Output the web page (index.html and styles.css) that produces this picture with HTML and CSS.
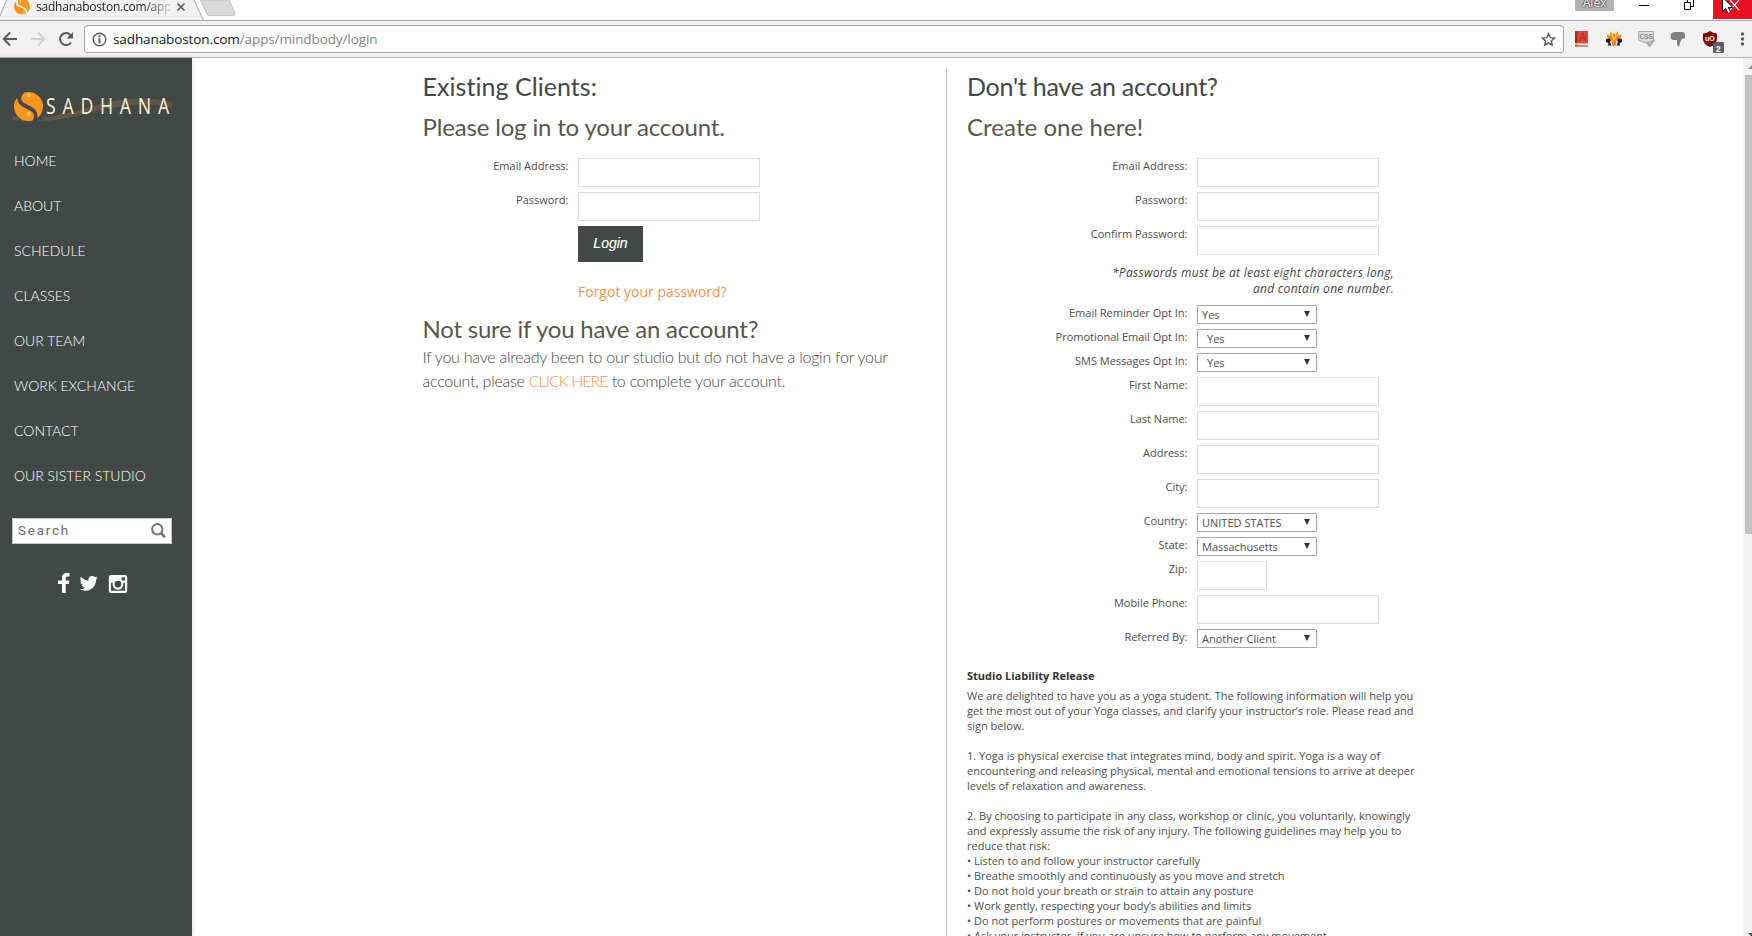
FILE: index.html
```html
<!DOCTYPE html>
<html lang="en">
<head>
<meta charset="utf-8">
<title>Sadhana</title>
<link rel="stylesheet" href="styles.css">
</head>
<body>
<header class="browser">
  <div class="tabs">
    <svg class="tab-shape" width="240" height="21" viewBox="0 0 240 21">
      <path d="M0 21V16L6.500 0H194L204 20.500V21Z" fill="#f1f1f1"/>
      <path d="M0 16L6.500 0M194 0L203.500 20.500H240" fill="none" stroke="#a8a8a8"/>
      <path d="M200.500 0H229L235 13.500q.5 2-1.500 2H210q-2.500 0-3.500-2z" fill="#d9d9d9" stroke="#c4c4c4"/>
      <g transform="translate(13.500 -2)"><circle cx="8.500" cy="8.500" r="8" fill="#f7941e"/><path d="M4.500 1C1.500 6 4 7.500 8 9s5.500 3 5 7" fill="none" stroke="#f1f1f1" stroke-width="1.800"/><path d="M9 0C6.500 2 6 4 7.500 5.500M8.500 17c2.500-2 3-4 1.500-5.500" fill="none" stroke="#f1f1f1" stroke-width=".7"/></g>
      <path d="M177.500 3.500l7 7m0-7l-7 7" stroke="#5a5a5a" stroke-width="1.700"/>
    </svg>
    <span class="tab-title">sadhanaboston.com/app</span>
    <div class="window-controls">
      <span class="user">Alex</span>
      <svg class="win-icons" width="114" height="20" viewBox="0 0 114 20">
        <path d="M1 5.500h10" stroke="#000"/>
        <path d="M46.500 2.500h6v7h-6zM49.500 2V-.5h6v7H53" fill="none" stroke="#000"/>
        <path d="M75 0h39v19H75z" fill="#e81123"/>
        <path d="M92 0l9 10M101 0l-9 10" stroke="#fff" stroke-width="1.200"/>
        <path d="M84.500-4V11.500l3.200-3 2.300 5 2.600-1.200-2.300-4.800h4.500L84.500-3" fill="#fff" stroke="#111"/>
      </svg>
    </div>
  </div>
  <div class="toolbar">
    <svg class="nav-icons" width="84" height="36" viewBox="0 0 84 36" fill="none" stroke-width="2">
      <path d="M17 18H4M10 11.500L3.800 18l6.200 6.500" stroke="#5a5a5a"/>
      <path d="M31 18h13M38 11.500l6.200 6.500-6.200 6.500" stroke="#d2d2d2"/>
      <path d="M71 21.500A6 6 0 1 1 70.500 14" stroke="#5a5a5a"/><path d="M73 11v6.500h-6.500z" fill="#5a5a5a"/>
    </svg>
    <div class="address">
      <svg width="15" height="15" viewBox="0 0 15 15" fill="none" stroke="#5a5a5a"><circle cx="7.500" cy="7.500" r="6.300" stroke-width="1.400"/><path d="M7.500 3.300v1.900M7.500 6.300v5" stroke-width="1.900"/></svg>
      <span class="url">sadhanaboston.com<i>/apps/mindbody/login</i></span>
      <svg class="star" width="15" height="15" viewBox="0 0 15 15" fill="none" stroke="#5a5a5a" stroke-width="1.400"><path d="M7.500 1.600l1.800 4 4.300.4-3.200 2.900.9 4.300-3.800-2.300-3.800 2.300.9-4.300L1.400 6l4.300-.4z"/></svg>
    </div>
    <svg class="extensions" width="182" height="36" viewBox="0 0 182 36">
      <path d="M5 10h13v15H5z" fill="#e0443a"/><path d="M5 10h2.500v12H5z" fill="#a92a25"/><path d="M5 22.500h13V25H5z" fill="#eee"/><path d="M5 22l3 1v2.500H5z" fill="#f1b72e"/><path d="M5 25h13" stroke="#8b2b24"/><path d="M9.500 20l3.200-8 3.200 8M10.500 17.500h4.500" fill="none" stroke="#b92f28" stroke-width="1.300"/>
      <path d="M40.500 10l2.500 4-4 1.500zM47.500 10l-2.500 4 4 1.500z" fill="#f5a623"/><path d="M36 13.500l5 1.500 3-3 3 3 5-1.500-2 4-3.500 2-1 5.500h-3l-1-5.500-3.500-2z" fill="#ee8a1d"/><path d="M42 14l2 5 2-5" fill="none" stroke="#ffd34a" stroke-width="1.200"/><path d="M36 18l3.500-.5 1.500 1.500-1 2 1.500 3.500H38l.5-2.500-2.500-1zM52 18l-3.500-.5-1.500 1.500 1 2-1.500 3.500H50l-.5-2.500 2.500-1z" fill="#1d1d1d"/>
      <path d="M68.500 10.500h15v9l-7.500 2.500-7.500-3z" fill="#ddd" stroke="#aaa"/><path d="M77 21l2.500 3.500 5-6" fill="none" stroke="#aaa" stroke-width="2.300"/><text x="69.500" y="18" class="css-badge">CSS</text>
      <path d="M101 13q1-2 4-2h7q3 0 3 3v3.500q-3-.5-4 1.500l-2 6.500q-2-.5-2-3v-3.500h-4q-2.500-.5-2.500-3z" fill="#808080"/>
      <path d="M140 10q-4 2.500-7 2.500V18q0 5 7 8 7-3 7-8v-5.500q-3 0-7-2.500z" fill="#800000"/><text x="135" y="20" class="shield-text">uO</text>
      <rect x="143" y="21" width="11" height="11" rx="1" fill="#5c5f63"/><text x="145.700" y="30.500" class="count">2</text>
      <g fill="#5a5a5a"><circle cx="172.500" cy="13" r="1.700"/><circle cx="172.500" cy="18" r="1.700"/><circle cx="172.500" cy="23" r="1.700"/></g>
    </svg>
  </div>
</header>

<div class="page">
  <aside class="sidebar">
    <svg class="logo" width="162" height="34" viewBox="0 0 162 34">
      <path d="M0 25C60 36 90-4 160 11v5C98 4 60 38 0 29z" fill="#5c5747"/>
      <circle cx="16.500" cy="15.500" r="14.500" fill="#f7941e"/>
      <path d="M6 2Q9 0 12 2C7 8 9 11 16 14s11 7 9 16l-5 1c4-7 2-10-5-13S3 10 6 2z" fill="#414845"/>
      <path d="M3 3l4 1-3 4zM30 29l-4-1 3-4zM22 0l5 5-2-5zM11 32l-5-6 2 6z" fill="#414845"/>
      <circle cx="17" cy="4.500" r="2.400" fill="#f9b84a"/><circle cx="16.500" cy="23.500" r="2.400" fill="#f9b84a"/>
      <text transform="translate(34 23) scale(.8 1)" class="logo-text" textLength="154">SADHANA</text>
    </svg>
    <nav class="menu">
      <a>HOME</a><a>ABOUT</a><a>SCHEDULE</a><a>CLASSES</a><a>OUR TEAM</a><a>WORK EXCHANGE</a><a>CONTACT</a><a>OUR SISTER STUDIO</a>
    </nav>
    <div class="search"><span>Search</span>
      <svg width="15" height="16" viewBox="0 0 15 16" fill="none" stroke="#757575"><circle cx="6.300" cy="6.300" r="5.200" stroke-width="2"/><path d="M10 10l4 4.300" stroke-width="2.600"/></svg>
    </div>
    <svg class="social" width="71" height="20" viewBox="0 0 71 20" fill="#fff">
      <path d="M4 20v-9H0V7.500h4V5c0-3.500 2-5 5-5l2.500.2v3.200H9.600C8 3.400 7.700 4.200 7.700 5.300v2.200h3.600l-.5 3.500H7.700v9z"/>
      <path d="M40 4.800a8 8 0 0 1-2 2c0 6-4.200 11-10.500 11-2.200 0-4.100-.6-5.500-1.700 2 .2 3.900-.4 5.300-1.500-1.700 0-3-1.200-3.500-2.600h1.600a3.700 3.700 0 0 1-2.900-3.700c.5.300 1 .5 1.600.5a3.700 3.700 0 0 1-1.100-5c2 2.300 4.500 3.700 7.600 3.900C30 4.500 32 3 34.300 3c1 0 2 .4 2.700 1.200l2.300-.9-1.600 2.100z"/>
      <path transform="translate(-.5)" fill-rule="evenodd" d="M53.500 2h14a2.200 2.200 0 0 1 2.200 2.200v13.600a2.200 2.200 0 0 1-2.200 2.200h-14a2.200 2.200 0 0 1-2.200-2.200V4.200A2.200 2.200 0 0 1 53.500 2zm10.600 2.200v3.300h3.300V4.200zM53.500 9.700v7.500q0 .6.600.6h12.800q.6 0 .6-.6V9.700h-1.700a5.500 5.500 0 1 1-10.600 0zm7 -2a3.400 3.400 0 1 0 0 6.800 3.400 3.400 0 0 0 0-6.800z"/>
    </svg>
  </aside>

  <main class="content">
    <section class="existing">
      <h2>Existing Clients:</h2>
      <h3>Please log in to your account.</h3>
      <div class="row"><label>Email Address:</label><span class="input"></span></div>
      <div class="row"><label>Password:</label><span class="input"></span></div>
      <button class="login">Login</button>
      <a class="forgot">Forgot your password?</a>
      <h3 class="unsure">Not sure if you have an account?</h3>
      <p class="help">If you have already been to our studio but do not have a login for your<br>account, please <a>CLICK HERE</a> to complete your account.</p>
    </section>
    <section class="create">
      <h2>Don't have an account?</h2>
      <h3>Create one here!</h3>
      <div class="row"><label>Email Address:</label><span class="input"></span></div>
      <div class="row"><label>Password:</label><span class="input"></span></div>
      <div class="row"><label>Confirm Password:</label><span class="input"></span></div>
      <p class="note">*Passwords must be at least eight characters long,<br>and contain one number.</p>
      <div class="row"><label>Email Reminder Opt In:</label><span class="select">Yes</span></div>
      <div class="row"><label>Promotional Email Opt In:</label><span class="select indented">Yes</span></div>
      <div class="row"><label>SMS Messages Opt In:</label><span class="select indented">Yes</span></div>
      <div class="row"><label>First Name:</label><span class="input"></span></div>
      <div class="row"><label>Last Name:</label><span class="input"></span></div>
      <div class="row"><label>Address:</label><span class="input"></span></div>
      <div class="row"><label>City:</label><span class="input"></span></div>
      <div class="row"><label>Country:</label><span class="select">UNITED STATES</span></div>
      <div class="row"><label>State:</label><span class="select">Massachusetts</span></div>
      <div class="row"><label>Zip:</label><span class="input short"></span></div>
      <div class="row"><label>Mobile Phone:</label><span class="input"></span></div>
      <div class="row"><label>Referred By:</label><span class="select">Another Client</span></div>
      <h4>Studio Liability Release</h4>
      <div class="release">We are delighted to have you as a yoga student. The following information will help you<br>get the most out of your Yoga classes, and clarify your instructor’s role. Please read and<br>sign below.<br><br>1. Yoga is physical exercise that integrates mind, body and spirit. Yoga is a way of<br>encountering and releasing physical, mental and emotional tensions to arrive at deeper<br>levels of relaxation and awareness.<br><br>2. By choosing to participate in any class, workshop or clinic, you voluntarily, knowingly<br>and expressly assume the risk of any injury. The following guidelines may help you to<br>reduce that risk:<br>• Listen to and follow your instructor carefully<br>• Breathe smoothly and continuously as you move and stretch<br>• Do not hold your breath or strain to attain any posture<br>• Work gently, respecting your body’s abilities and limits<br>• Do not perform postures or movements that are painful<br>• Ask your instructor, if you are unsure how to perform any movement</div>
    </section>
  </main>

  <div class="scrollbar">
    <svg width="9" height="17" viewBox="0 0 9 17"><path d="M5 11l4-4v4z" fill="#8a8a8a"/></svg>
    <div class="thumb"></div>
    <svg class="down" width="9" height="3" viewBox="0 0 9 3"><path d="M5 0h4v3h-1z" fill="#505050"/></svg>
  </div>
</div>
</body>
</html>
```
FILE: styles.css
```css
* { box-sizing: border-box; }
body { margin: 0; height: 936px; overflow: hidden; background: #fff; font-family: "Open Sans", sans-serif; color: #4d4d4d; }
h2, h3, h4, p { margin: 0; }
svg { display: block; flex: none; }

.browser { height: 58px; background: #f1f1f1; border-bottom: 1px solid #b0b0b0; }
.tabs { display: flex; height: 21px; background: #fff; border-bottom: 1px solid #a8a8a8; overflow: hidden; }
.tab-shape { margin-right: -204px; }
.tab-title { width: 134px; height: 20px; white-space: nowrap; font-size: 12px; line-height: 14px; letter-spacing: -.220px; color: #222; z-index: 1; -webkit-mask-image: linear-gradient(90deg, #000 108px, transparent 140px); mask-image: linear-gradient(90deg, #000 108px, transparent 140px); }
.window-controls { display: flex; margin-left: auto; }
.user { width: 39px; height: 11px; margin-right: 24px; background: #b3b3b3; color: #fff; font: 12px/5px "Noto Sans", sans-serif; text-align: center; text-shadow: 0 0 1px #333, 0 0 2px #333, 0 0 1px #333; }
.toolbar { display: flex; height: 36px; }
.address { display: flex; align-items: center; width: 1480px; height: 28px; margin-top: 4px; padding: 0 7px; background: #fff; border: 1px solid #a8a8a8; border-radius: 3px; }
.url { margin: 0 auto 0 6px; font-size: 13.500px; letter-spacing: -.1px; color: #111; white-space: nowrap; }
.url i { font-style: normal; color: #808080; }
.extensions { margin-left: 6px; }
.css-badge { font: bold 6.500px "Liberation Sans", sans-serif; fill: #888; }
.shield-text { font: bold 7px "Liberation Sans", sans-serif; fill: #fff; }
.count { font: bold 9px "Liberation Sans", sans-serif; fill: #fff; }

.page { display: flex; height: 878px; }
.sidebar { flex: none; width: 192px; padding: 33px 12px 0; background: #414845; box-shadow: 0 0 5px rgba(0,0,0,.15); }
.logo-text { font-family: "Noto Sans", sans-serif; font-size: 22px; fill: #f2ead0; }
.menu { display: flex; flex-direction: column; margin-top: 13px; padding-left: 2px; font: 300 14px/45px Lato, sans-serif; color: #fff; white-space: nowrap; }
.search { display: flex; align-items: center; justify-content: space-between; width: 160px; height: 26px; margin-top: 20px; padding: 0 5px; border: 1px solid #c8c8c8; background: #fff; font: 13.330px Roboto, sans-serif; letter-spacing: 1.850px; color: #6c6c6c; }
.search span { padding-bottom: 2px; }
.social { margin: 29px 0 0 46px; }

.content { display: flex; flex: 1; padding: 10px 0 0 230.500px; overflow: hidden; }
.existing { width: 523.500px; }
.create { width: 470px; margin-top: 1px; padding-left: 20px; border-left: 1px solid #bfbfbf; }
h2 { height: 38px; font: 400 25px/36px Lato, sans-serif; font-variant-ligatures: none; letter-spacing: .050px; color: #414845; }
h3 { height: 52px; font: 400 24px/42px Lato, sans-serif; letter-spacing: -.160px; color: #5a564d; }
.create h2 { height: 37px; line-height: 34px; letter-spacing: -.240px; }
.create h3 { letter-spacing: .060px; }
.row { display: grid; grid-template-columns: 146px auto; column-gap: 9.500px; justify-content: start; margin-bottom: 5px; font-size: 11px; }
.create .row { grid-template-columns: 220.500px auto; column-gap: 9.500px; }
.row label { line-height: 16px; text-align: right; }
.input { width: 182px; height: 29px; border: 1px solid #dcdcdc; }
.short { width: 70px; }
.select { display: flex; justify-content: space-between; width: 120px; height: 19px; padding: 0 5px 0 4px; border: 1px solid #a6a6a6; border-radius: 1px; line-height: 18px; }
.select::after { content: ""; width: 0; height: 0; margin-top: 5px; border: 3px solid transparent; border-top: 6px solid #333; border-bottom: 0; margin-right: 1px; }
.indented { padding-left: 9px; }
.login { display: block; width: 65px; height: 36px; margin-left: 155.500px; padding: 0 0 2px; border: 0; background: #414845; color: #fff; font: italic 14px/34px "Liberation Sans", sans-serif; -webkit-text-stroke: .15px #fff; }
.forgot { display: block; margin: 20px 0 0 155.500px; font-size: 14px; line-height: 20px; color: #f7944a; }
h3.unsure { height: 40px; margin-top: 5px; line-height: 44px; letter-spacing: -.220px; }
.help { margin-top: -2px; font: 300 16px/24px Lato, sans-serif; letter-spacing: -.245px; color: #414845; white-space: nowrap; }
.help a { letter-spacing: -1px; color: #f7944a; }
.note { width: 427px; margin: 10px 0 8px; font-size: 12px; font-style: italic; line-height: 16px; letter-spacing: .290px; text-align: right; color: #444; }
h4 { margin-top: 20px; font-size: 11px; line-height: 16px; color: #333; }
.release { margin-top: 4px; font-size: 11px; line-height: 15px; white-space: nowrap; }

.scrollbar { display: flex; flex-direction: column; width: 9px; background: #f1f1f1; }
.thumb { width: 7px; height: 459px; margin-left: 2px; background: #c1c1c1; }
.down { margin-top: auto; }
```
